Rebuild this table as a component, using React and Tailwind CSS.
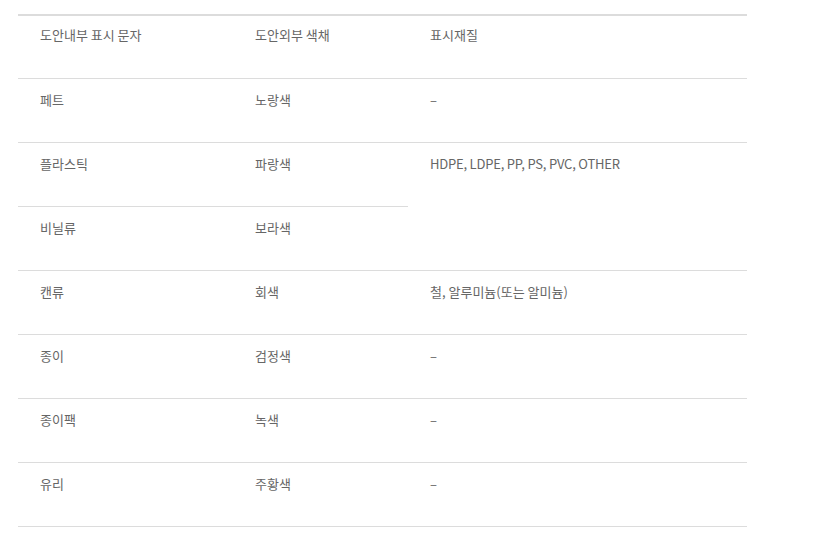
export default function App() {
  const base = "align-top pb-0 pl-[22px] border-b border-[#dcdcdc]";
  const td = base + " pt-[11px] h-[64px]";
  const th = base + " pt-[9px] h-[63px]";
  return (
    <div className="w-[835px] h-[534px] bg-white pt-[14px] pl-[18px] font-['Noto_Sans_CJK_KR',sans-serif] text-[13px] leading-[20px] text-[#666]">
      <table className="w-[729px] border-collapse border-t-2 border-[#dcdcdc] table-fixed">
        <colgroup>
          <col className="w-[215px]" />
          <col className="w-[175px]" />
          <col className="w-[339px]" />
        </colgroup>
        <tbody>
          <tr>
            <td className={th}>도안내부 표시 문자</td>
            <td className={th}>도안외부 색채</td>
            <td className={th}>표시재질</td>
          </tr>
          <tr>
            <td className={td}>페트</td>
            <td className={td}>노랑색</td>
            <td className={td}>–</td>
          </tr>
          <tr>
            <td className={td}>플라스틱</td>
            <td className={td}>파랑색</td>
            <td className={td + " tracking-[-0.2px]"} rowSpan={2}>HDPE, LDPE, PP, PS, PVC, OTHER</td>
          </tr>
          <tr>
            <td className={td}>비닐류</td>
            <td className={td}>보라색</td>
          </tr>
          <tr>
            <td className={td}>캔류</td>
            <td className={td}>회색</td>
            <td className={td}>철, 알루미늄(또는 알미늄)</td>
          </tr>
          <tr>
            <td className={td}>종이</td>
            <td className={td}>검정색</td>
            <td className={td}>–</td>
          </tr>
          <tr>
            <td className={td}>종이팩</td>
            <td className={td}>녹색</td>
            <td className={td}>–</td>
          </tr>
          <tr>
            <td className={td}>유리</td>
            <td className={td}>주황색</td>
            <td className={td}>–</td>
          </tr>
        </tbody>
      </table>
    </div>
  );
}
